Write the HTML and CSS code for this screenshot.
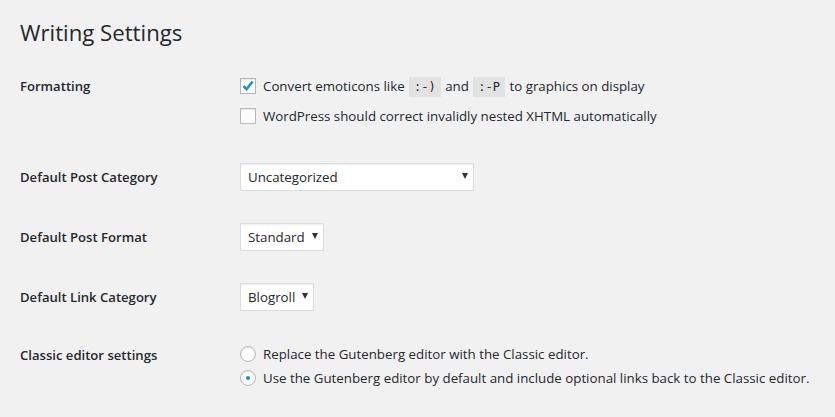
FILE: index.html
```html
<!DOCTYPE html>
<html>
<head>
<meta charset="utf-8">
<link rel="stylesheet" href="styles.css">
</head>
<body>
<div class="wrap">
  <h1 class="title">Writing Settings</h1>
  <div class="form">
    <div class="row row-format">
      <div class="th">Formatting</div>
      <div class="td">
        <div class="opt">
          <span class="cb checked"><svg viewBox="0 0 16 16" width="16" height="16"><path d="M3.5 8.2 L6.6 11.2 L12.6 3.6" fill="none" stroke="#1e8cbe" stroke-width="2.4" stroke-linecap="butt" stroke-linejoin="miter"/></svg></span>
          <span>Convert emoticons like <code>:-)</code> and <code>:-P</code> to graphics on display</span>
        </div>
        <div class="opt">
          <span class="cb"></span>
          <span>WordPress should correct invalidly nested XHTML automatically</span>
        </div>
      </div>
    </div>
    <div class="row row-select">
      <div class="th">Default Post Category</div>
      <div class="td"><span class="select wide">Uncategorized<i class="arrow"></i></span></div>
    </div>
    <div class="row row-select">
      <div class="th">Default Post Format</div>
      <div class="td"><span class="select">Standard<i class="arrow"></i></span></div>
    </div>
    <div class="row row-select">
      <div class="th">Default Link Category</div>
      <div class="td"><span class="select">Blogroll<i class="arrow"></i></span></div>
    </div>
    <div class="row row-radio">
      <div class="th">Classic editor settings</div>
      <div class="td">
        <div class="ropt"><span class="radio"></span><span>Replace the Gutenberg editor with the Classic editor.</span></div>
        <div class="ropt"><span class="radio on"></span><span>Use the Gutenberg editor by default and include optional links back to the Classic editor.</span></div>
      </div>
    </div>
  </div>
</div>
</body>
</html>
```
FILE: styles.css
```css
html, body {
  margin: 0;
  padding: 0;
  background: #f1f1f1;
}
body {
  font-family: "Open Sans", "Noto Sans", sans-serif;
  font-size: 13.3px;
  color: #23282d;
}
.wrap {
  padding: 0 20px;
}
.title {
  margin: 0;
  padding-top: 18px;
  font-size: 22.2px;
  line-height: 29px;
  font-weight: 400;
  color: #23282d;
}
.form {
  padding-top: 24px;
}
.row {
  display: grid;
  grid-template-columns: 200px 1fr;
  column-gap: 20px;
}
.th {
  font-weight: 600;
  font-size: 13.1px;
}
.row-format .th {
  line-height: 30px;
}
.row-format .td {
  padding-bottom: 16px;
}
.opt {
  display: flex;
  align-items: center;
  height: 30px;
}
.cb {
  width: 14px;
  height: 14px;
  border: 1px solid #b4b9be;
  background: #fff;
  box-shadow: inset 0 1px 2px rgba(0,0,0,.1);
  margin-right: 7px;
  position: relative;
  flex: none;
}
.cb svg {
  position: absolute;
  left: -1px;
  top: -1px;
}
code {
  font-family: "DejaVu Sans Mono", "Liberation Mono", monospace;
  font-size: 12px;
  background: #e2e2e2;
  padding: 3px 5px 3px;
  margin: 0 1px;
}
.row-select {
  height: 60px;
  align-items: center;
}
.select {
  display: inline-flex;
  align-items: center;
  height: 26px;
  border: 1px solid #ddd;
  background: #fff;
  box-shadow: inset 0 1px 2px rgba(0,0,0,.07);
  padding: 0 5px 0 7px;
  box-sizing: content-box;
  position: relative;
  vertical-align: middle;
}
.select.wide {
  width: 220px;
}
.arrow {
  display: inline-block;
  width: 0;
  height: 0;
  border-left: 3.5px solid transparent;
  border-right: 3.5px solid transparent;
  border-top: 6px solid #333;
  margin-left: 7px;
  margin-top: -2px;
}
.select.wide .arrow {
  margin-left: auto;
}
.row-radio {
  padding-top: 15px;
}
.row-radio .th {
  line-height: 24px;
  padding-top: 1px;
}
.ropt {
  display: flex;
  align-items: center;
  height: 24px;
}
.radio {
  width: 14px;
  height: 14px;
  border: 1px solid #b4b9be;
  border-radius: 50%;
  background: #fff;
  box-shadow: inset 0 1px 2px rgba(0,0,0,.1);
  margin-right: 7px;
  flex: none;
  position: relative;
}
.radio.on::after {
  content: "";
  position: absolute;
  left: 5px;
  top: 5px;
  width: 4px;
  height: 4px;
  border-radius: 50%;
  background: #1e8cbe;
}
```
